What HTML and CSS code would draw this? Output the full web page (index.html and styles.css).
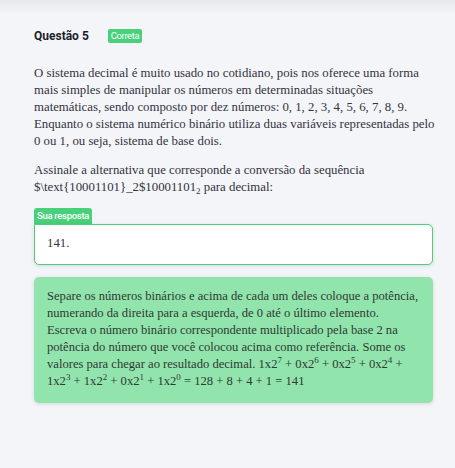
FILE: index.html
```html
<!DOCTYPE html>
<html lang="pt">
<head>
<meta charset="utf-8">
<link rel="stylesheet" href="styles.css">
</head>
<body>
<div class="topshade"></div>
<main class="page">
  <header class="qhead">
    <h2 class="qtitle">Questão 5</h2>
    <span class="badge">Correta</span>
  </header>
  <p class="text">O sistema decimal é muito usado no cotidiano, pois nos oferece uma forma mais simples de manipular os números em determinadas situações matemáticas, sendo composto por dez números: 0, 1, 2, 3, 4, 5, 6, 7, 8, 9. Enquanto o sistema numérico binário utiliza duas variáveis representadas pelo 0 ou 1, ou seja, sistema de base dois.</p>
  <p class="text">Assinale a alternativa que corresponde a conversão da sequência $\text{10001101}_2$10001101<sub>2</sub> para decimal:</p>
  <section class="answer">
    <span class="answer-label">Sua resposta</span>
    <div class="answer-box">141.</div>
  </section>
  <div class="feedback">Separe os números binários e acima de cada um deles coloque a potência, numerando da direita para a esquerda, de 0 até o último elemento.<br>Escreva o número binário correspondente multiplicado pela base 2 na potência do número que você colocou acima como referência. Some os valores para chegar ao resultado decimal. 1x2<sup>7</sup> + 0x2<sup>6</sup> + 0x2<sup>5</sup> + 0x2<sup>4</sup> + 1x2<sup>3</sup> + 1x2<sup>2</sup> + 0x2<sup>1</sup> + 1x2<sup>0</sup> = 128 + 8 + 4 + 1 = 141</div>
</main>
</body>
</html>
```
FILE: styles.css
```css
html, body {
  margin: 0;
  padding: 0;
  background: #f4f5f9;
}
body {
  width: 455px;
  height: 468px;
  overflow: hidden;
  position: relative;
}
.topshade {
  position: absolute;
  left: 0;
  top: 0;
  width: 100%;
  height: 14px;
  background: linear-gradient(#e7e8ec, rgba(244,245,249,0));
}
.page {
  padding: 28px 20px 0 34px;
}
.qhead {
  display: flex;
  align-items: center;
  gap: 19px;
  height: 16px;
  margin-bottom: 21px;
}
.qtitle {
  margin: 0;
  font-family: "Roboto", "Liberation Sans", sans-serif;
  font-weight: 700;
  font-size: 12px;
  color: #1e1e2a;
}
.badge {
  background: #48d07a;
  color: #fff;
  font-family: "Roboto", "Liberation Sans", sans-serif;
  font-size: 9.5px;
  letter-spacing: -0.4px;
  padding: 1px 3px;
  border-radius: 2px;
  line-height: 12px;
}
.text {
  font-family: "Liberation Serif", serif;
  font-size: 12.8px;
  line-height: 17px;
  color: #333340;
  margin: 0 0 12px 0;
}
sub, sup {
  font-size: 9px;
  line-height: 0;
}
sub {
  vertical-align: -3px;
}
sup {
  vertical-align: 5px;
}
.answer {
  margin-top: 12px;
  display: flex;
  flex-direction: column;
  align-items: flex-start;
  margin-right: 2px;
}
.answer-label {
  background: #48d07a;
  color: #fff;
  font-family: "Roboto", "Liberation Sans", sans-serif;
  font-size: 9.5px;
  font-weight: 500;
  letter-spacing: -0.3px;
  line-height: 16px;
  padding: 0 3px;
  border-radius: 3px 3px 0 0;
}
.answer-box {
  align-self: stretch;
  box-sizing: border-box;
  height: 41px;
  background: #fff;
  border: 1.5px solid #48d07a;
  border-radius: 0 5px 5px 5px;
  box-shadow: 0 1px 4px rgba(0,0,0,0.12);
  padding: 10px 12px;
  font-family: "Liberation Serif", serif;
  font-size: 12.8px;
  line-height: 17px;
  color: #333340;
}
.feedback {
  margin-top: 12px;
  margin-right: 2px;
  background: #91e4ac;
  border-radius: 5px;
  box-shadow: 0 1px 4px rgba(0,0,0,0.12);
  padding: 11px 8px 13px 13px;
  font-family: "Liberation Serif", serif;
  font-size: 12.6px;
  line-height: 17px;
  color: #2f3a33;
}
```
